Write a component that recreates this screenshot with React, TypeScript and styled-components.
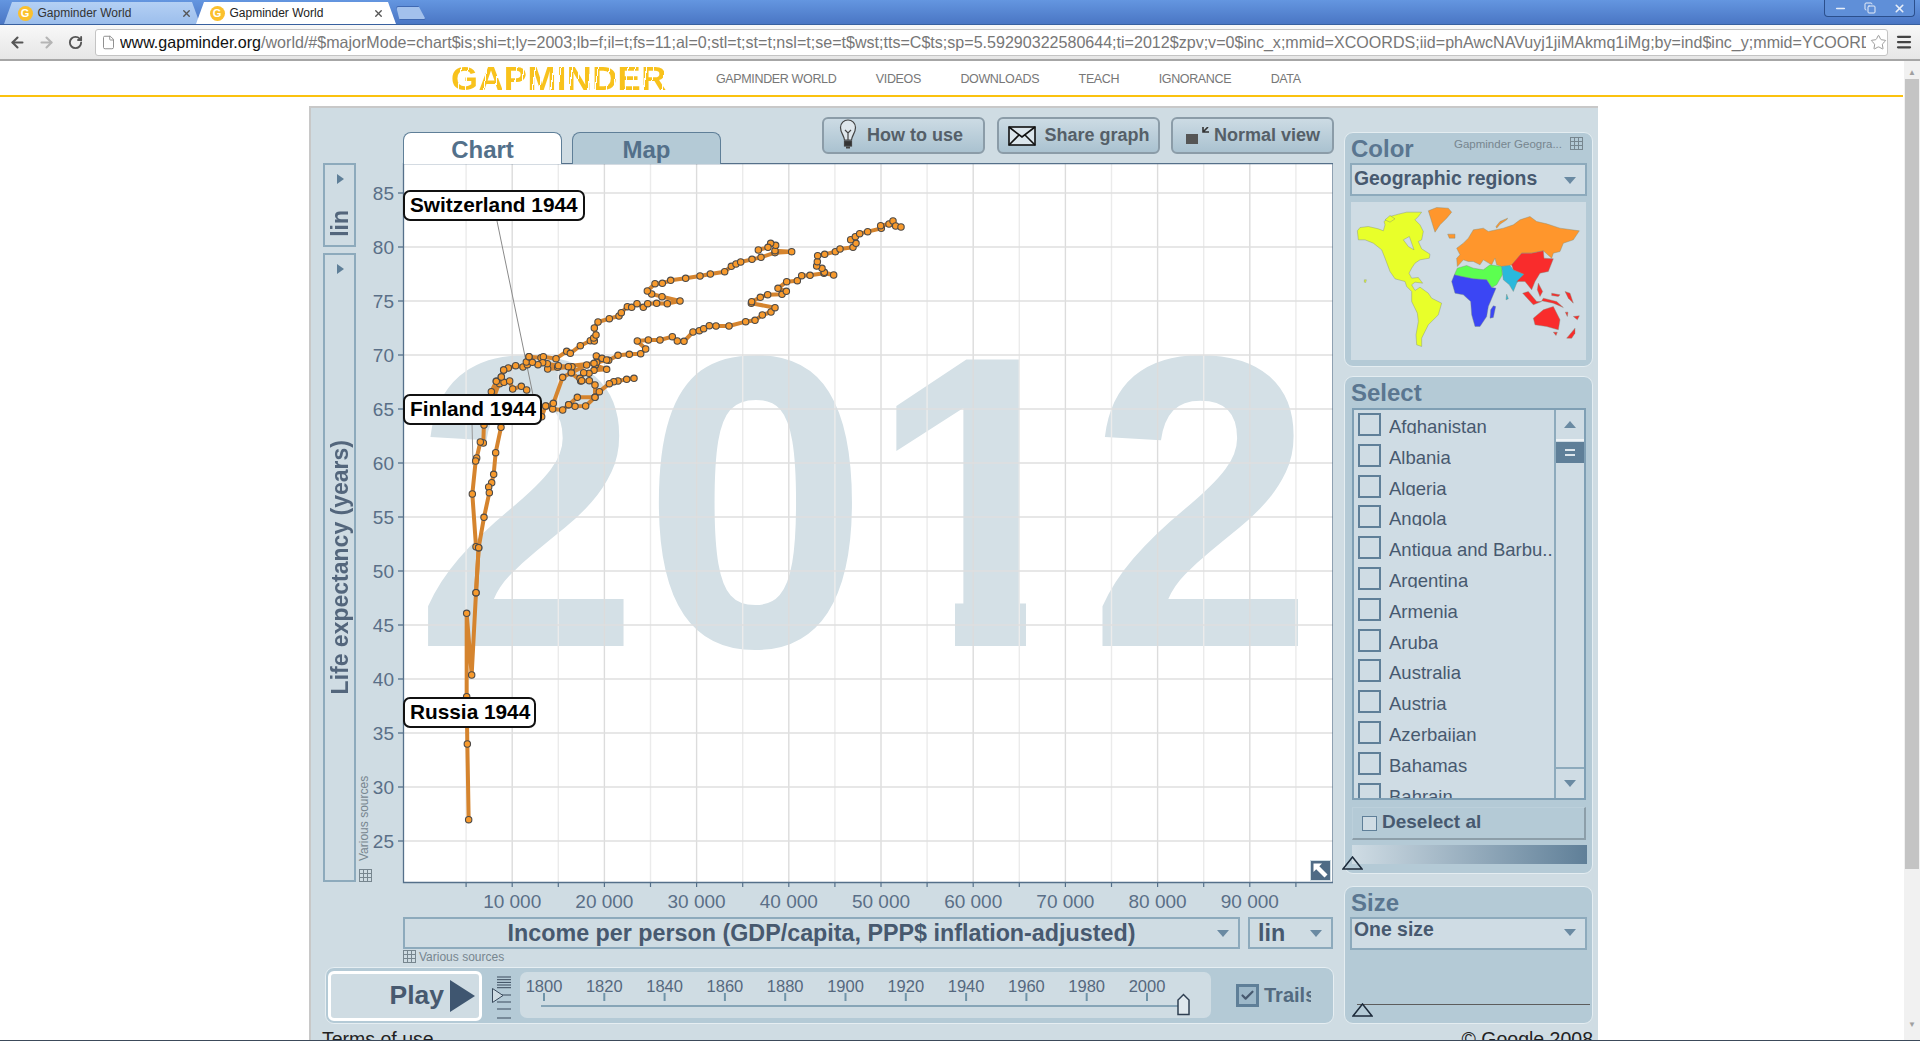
import React from "react";
import styled, { createGlobalStyle } from "styled-components";
import { ArrowLeft, ArrowRight, RotateCw, Star, File, Menu, Minus, Copy, X, Check } from "lucide-react";

const Global = createGlobalStyle`
  html, body { margin: 0; padding: 0; background: #fff; overflow: hidden; }
  body { font-family: "Liberation Sans", Arial, sans-serif; }
  * { box-sizing: border-box; }
`;

const Window = styled.div`
  width: 1920px; height: 1041px; display: flex; flex-direction: column; overflow: hidden;
  border-bottom: 1px solid #3c4a5a; background: #fff;
`;
const TabStrip = styled.div`
  height: 25px; flex: none; display: flex; align-items: flex-end; padding-left: 4px; position: relative;
  background: linear-gradient(#6496e0, #4a76c4); border-bottom: 1px solid #38609f;
`;
const Tab = styled.div<{ $active?: boolean }>`
  width: ${p => (p.$active ? 200 : 196)}px; height: 22px; margin-right: -4px; display: flex; align-items: center; gap: 5px;
  padding: 0 ${p => (p.$active ? 12 : 8)}px 0 13.5px; font-size: 12px;
  color: ${p => (p.$active ? "#222" : "#333")};
  background: ${p => (p.$active ? "#fff" : "linear-gradient(#b4d0f4, #9cbeec)")};
  clip-path: polygon(0 100%, 8px 0, calc(100% - 8px) 0, 100% 100%);
`;
const Favicon = styled.span`
  width: 15px; height: 15px; border-radius: 50%; background: #fbc02d; color: #fff; font-weight: bold; font-size: 11px;
  display: flex; align-items: center; justify-content: center; flex: none;
`;
const TabTitle = styled.span`flex: 1; white-space: nowrap;`;
const NewTab = styled.div`
  width: 30px; height: 14px; margin: 0 0 4px 4px; background: #a3c1ec; border: 1px solid #3f69b3;
  clip-path: polygon(0 0, 75% 0, 100% 100%, 12% 100%); border-radius: 2px;
`;
const WindowControls = styled.div`
  position: absolute; top: 0; right: 5px; width: 91px; height: 17px; display: flex; align-items: center; justify-content: space-around;
  border: 1px solid #2b4f8c; border-top: none; border-radius: 0 0 4px 4px; color: #e8eef8; background: #5f8fd8;
`;
const ToolBar = styled.div`
  height: 36px; flex: none; display: flex; align-items: center; padding-left: 3px;
  background: linear-gradient(#f8f8f8, #e6e6e6); border-bottom: 2px solid #a6a6a6; color: #555;
`;
const NavIcon = styled.span<{ $faded?: boolean }>`
  width: 29px; display: flex; justify-content: center; color: ${p => (p.$faded ? "#b5b5b5" : "#555")};
`;
const AddressBar = styled.div`
  margin-left: 5px; width: 1794px; height: 27px; background: #fff; border: 1px solid #c4c4c4; border-radius: 3px;
  display: flex; align-items: center; padding: 0 0 0 5px; gap: 4px; color: #8a8a8a;
`;
const Url = styled.div`
  width: 1746px; flex: none; overflow: hidden; white-space: nowrap; font-size: 16.07px; color: #777;
  b { font-weight: normal; color: #111; }
`;
const MenuSlot = styled.span`width: 32px; display: flex; justify-content: center; color: #444;`;

const PageRow = styled.div`flex: 1; min-height: 0; display: flex;`;
const PageBody = styled.div`width: 1904px; flex: none; display: flex; flex-direction: column; min-height: 0;`;
const Scrollbar = styled.div`
  width: 16px; flex: none; background: #f1f1f1; display: flex; flex-direction: column; align-items: center; padding-top: 6px; color: #a0a0a0; font-size: 8px;
`;
const ScrollArrow = styled.div`height: 11px; line-height: 11px;`;
const ScrollThumb = styled.div`width: 14px; height: 790px; background: #c4c4c4; margin-top: 1px; margin-bottom: 150px;`;

const SiteNav = styled.div`
  height: 36px; flex: none; display: flex; align-items: center; padding-left: 451px;
  border-bottom: 2px solid #fbc20f; margin-right: 1px;
`;
const Logo = styled.div`
  width: 215px; margin-right: 50px; font-size: 34px; line-height: 30px; font-weight: bold; letter-spacing: 0.4px; white-space: nowrap;
  color: transparent; transform: scaleX(1.02); transform-origin: left center;
  background-image: repeating-linear-gradient(98deg, #f8c21c 0 10px, #fff 10px 11.2px, #f8c21c 11.2px 17px, #fff 17px 18px);
  -webkit-background-clip: text; background-clip: text;
`;
const NavLinks = styled.div`display: flex; gap: 39.5px; padding-top: 1px;`;
const NavLink = styled.span`font-size: 12.5px; color: #777; letter-spacing: -0.36px; white-space: nowrap;`;

const Stage = styled.div`
  margin: 9px 0 0 309px; width: 1289px; flex: 1; min-height: 0; overflow: hidden; background: #cfdce3;
  border-left: 2px solid #c8c8c8; border-top: 2px solid #c8c8c8; padding: 9px 5px 0 12px;
  display: grid; grid-template-columns: 1011px 249px; column-gap: 10px; grid-template-rows: 907px auto;
`;
const LeftColumn = styled.div`display: flex; flex-direction: column;`;
const TopRow = styled.div`height: 47px; flex: none; padding-left: 80px; display: flex; justify-content: space-between;`;
const Tabs = styled.div`display: flex; gap: 10px; align-items: flex-end;`;
const ChartTab = styled.div<{ $active?: boolean; $w: number }>`
  width: ${p => p.$w}px; height: 32px; border: 1px solid #5f7f98; border-bottom: none; border-radius: 8px 8px 0 0;
  background: ${p => (p.$active ? "#fff" : "#b4cad6")}; color: #53708a; font-size: 24px; font-weight: bold; text-align: center; line-height: 33px;
  position: relative; z-index: 1;
`;
const Actions = styled.div`display: flex; gap: 11.5px; align-items: flex-start;`;
const ActionButton = styled.div`
  width: 163px; height: 37px; border: 2px solid #8b9ca8; border-radius: 6px; background: linear-gradient(#ccdbe4, #aac2d0);
  color: #555f68; font-size: 18px; font-weight: bold; display: flex; align-items: center; white-space: nowrap;
`;
const ChartRow = styled.div`height: 754px; flex: none; display: flex; margin-top: -1px;`;
const AxisBar = styled.div`width: 33px; flex: none; display: flex; flex-direction: column; gap: 6px; height: 719px;`;
const AxisBox = styled.div<{ $h: number }>`
  height: ${p => p.$h}px; flex: none; border: 2px solid #8daabc; display: flex; flex-direction: column; align-items: center; padding-top: 9px;
  color: #53667c; font-weight: bold; font-size: 23px;
`;
const TriRight = styled.div`
  width: 0; height: 0; border-left: 7px solid #5f7f98; border-top: 5.5px solid transparent; border-bottom: 5.5px solid transparent; margin-left: 1px; flex: none;
`;
const Vertical = styled.div<{ $top: number }>`
  writing-mode: vertical-rl; transform: rotate(180deg); margin-top: ${p => p.$top}px; white-space: nowrap; line-height: 28px;
`;
const ChartArea = styled.div`position: relative; width: 977px; height: 754px; flex: none;`;
const Bubble = styled.div<{ $x: number; $y: number; $w: number }>`
  position: absolute; left: ${p => p.$x}px; top: ${p => p.$y}px; width: ${p => p.$w}px; height: 31px; background: #fff; border: 2px solid #111; border-radius: 7px;
  font-size: 20.8px; font-weight: bold; color: #000; line-height: 25px; padding-left: 5px; white-space: nowrap;
`;
const ExpandButton = styled.div`
  position: absolute; left: 954px; top: 697px; width: 21px; height: 21px; background: #4f6b85; color: #fff; display: flex; align-items: center; justify-content: center; border: 1px solid #cfdce3;
`;
const DropRow = styled.div`height: 32px; flex: none; display: flex; gap: 8px; margin-left: 80px;`;
const AxisSelect = styled.div<{ $w: number }>`
  width: ${p => p.$w}px; height: 32px; border: 2px solid #8daabc; display: flex; align-items: center; color: #47596f; font-size: 23.3px; font-weight: bold; position: relative; white-space: nowrap;
`;
const AxisSelectText = styled.span`flex: 1; text-align: center; padding-left: 21px;`;
const LinText = styled.span`flex: 1; padding-left: 8px;`;
const TriDown = styled.div<{ $right: number }>`
  flex: none; margin-right: ${p => p.$right}px; width: 0; height: 0; border-top: 7px solid #6a8aa2; border-left: 6px solid transparent; border-right: 6px solid transparent;
`;
const SourceRow = styled.div`height: 18px; flex: none; margin-left: 80px; display: flex; align-items: flex-start; gap: 3px; font-size: 12px; line-height: 15px; color: #77868f; padding-top: 1px;`;
const PlayBar = styled.div`
  height: 57px; width: 1009px; margin-left: 2px; flex: none; display: flex; align-items: center; background: #b4cad6; border: 1px solid #e6eef2; border-radius: 9px; padding-left: 2px;
`;
const PlayButton = styled.div`
  width: 154px; height: 50px; flex: none; border: 3px solid #fff; border-radius: 6px; background: #cfdce3; color: #47596f; font-size: 26.5px; font-weight: bold;
  display: flex; align-items: center; justify-content: flex-end; gap: 6px; padding-right: 4px;
`;
const PlayTri = styled.div`width: 0; height: 0; border-left: 25px solid #3f5670; border-top: 16px solid transparent; border-bottom: 16px solid transparent;`;
const SpeedSlot = styled.div`width: 38px; flex: none; display: flex; padding-left: 9px; align-self: stretch;`;
const Timeline = styled.div`width: 691px; height: 46px; flex: none; background: #cfdce3; border-radius: 7px; align-self: flex-start; margin-top: 4px;`;
const TrailsBox = styled.div`display: flex; align-items: center; gap: 5px; margin-left: 25px; width: 75px; overflow: hidden; color: #536a80; font-size: 20px; font-weight: bold;`;
const TrailCheck = styled.div`
  width: 23px; height: 23px; flex: none; border: 3px solid #5f7f98; background: #9db8c9; color: #47596f; display: flex; align-items: center; justify-content: center;
`;
const RightColumn = styled.div`padding-top: 15px; display: flex; flex-direction: column;`;
const Panel = styled.div<{ $h: number; $gap: number }>`
  height: ${p => p.$h}px; flex: none; margin-bottom: ${p => p.$gap}px; background: #b4cad6; border: 1px solid #e4edf1; border-radius: 9px; padding: 0 5px; position: relative;
`;
const PanelHead = styled.div<{ $h: number }>`
  height: ${p => p.$h}px; display: flex; align-items: center; justify-content: space-between; padding: 1px 4px 0 1px;
`;
const PanelTitle = styled.span`font-size: 24px; font-weight: bold; color: #5a7690;`;
const SourceHint = styled.span`font-size: 11.5px; color: #77868f; display: flex; align-items: center; gap: 8px; margin-bottom: 10px;`;
const Select = styled.div<{ $top?: boolean }>`
  height: 33px; border: 2px solid #8daabc; background: #cfdce4; display: flex; justify-content: space-between;
  align-items: ${p => (p.$top ? "flex-start" : "center")}; color: #47596f; font-size: 19.4px; font-weight: bold; padding: 0 0 ${p => (p.$top ? 0 : 4)}px 2px;
  line-height: 20px;
`;
const DropAlign = styled.div<{ $top?: boolean }>`margin-top: ${p => (p.$top ? 10 : 5)}px;`;
const MapBox = styled.div`margin: 6px 1px 0; height: 158px; background: #cfdce4;`;
const ListBox = styled.div`height: 392px; margin: 0 1px 0 2px; border: 2px solid #7f9fb4; background: #cfdce4; display: flex; overflow: hidden;`;
const Rows = styled.div`width: 200px; flex: none; padding: 3px 0 0 4px; overflow: hidden;`;
const Row = styled.div`height: 30.8px; display: flex; gap: 8px; align-items: flex-start;`;
const Box = styled.div`width: 23px; height: 23px; flex: none; border: 2px solid #5f7f98;`;
const RowText = styled.span`
  display: block; margin-top: 3px; height: 18px; line-height: 21px; overflow: hidden; font-size: 18.5px; color: #47596f; white-space: nowrap;
`;
const ScrollCol = styled.div`flex: 1; border-left: 2px solid #8daabc; display: flex; flex-direction: column; align-items: stretch;`;
const ScrollBtn = styled.div<{ $down?: boolean }>`
  height: 31px; flex: none; display: flex; align-items: center; justify-content: center;
  ${p => (p.$down ? "border-top: 2px solid #8daabc; margin-top: auto;" : "border-bottom: 2px solid #eef3f6;")}
`;
const TriUp = styled.div`width: 0; height: 0; border-bottom: 7px solid #6a8aa2; border-left: 6px solid transparent; border-right: 6px solid transparent;`;
const Thumb = styled.div`height: 21px; margin-top: 1px; background: #5f7f98; display: flex; align-items: center; justify-content: center;`;
const ThumbGrip = styled.div`width: 10px; height: 7px; border-top: 2px solid #dde6ec; border-bottom: 2px solid #dde6ec;`;
const Deselect = styled.div`
  height: 33px; margin: 7px 1px 0 2px; border: 1px solid #bcd0db; border-right: 2px solid #8c9ea9; border-bottom: 2px solid #8c9ea9; display: flex; align-items: center; gap: 5px;
  padding: 0 0 2px 9px; color: #47596f; font-size: 19px; font-weight: bold;
`;
const SmallBox = styled.div`width: 15px; height: 15px; border: 1px solid #5f7f98; background: #cfdce4; margin-top: 2px;`;
const Ramp = styled.div`height: 19px; margin: 5px 0 0 2px; background: linear-gradient(90deg, #cfdce4, #5f7f98);`;
const Marker = styled.svg<{ $x: number; $y: number }>`position: absolute; left: ${p => p.$x}px; top: ${p => p.$y}px;`;
const SizeLine = styled.div`height: 1px; margin: 54px -3px 0 7px; background: #5d5d5d;`;
const Footer = styled.div`
  grid-column: 1 / 3; display: flex; justify-content: space-between; font-size: 19.5px; color: #222; padding: 4px 0 0 0; margin-left: -1px; line-height: 22px;
`;

const GridIcon = () => (
  <svg width="13" height="13" viewBox="0 0 13 13" fill="none" stroke="#77868f" strokeWidth="1" style={{ flex: "none" }}>
    <rect x=".5" y=".5" width="12" height="12" />
    <path d="M4.5 0v13M8.5 0v13M0 4.5h13M0 8.5h13" />
  </svg>
);

const yTicks = [85, 80, 75, 70, 65, 60, 55, 50, 45, 40, 35, 30, 25];
const xGrid = Array.from({ length: 19 }, (_, i) => (i + 1) * 5000);
const yPos = (v: number) => 193 + (85 - v) * 10.8;
const xPos = (v: number) => 420 + (v / 10000) * 92.2;

const z4 = (a: number[]) => { const o: [number, number][] = []; for (let i = 0; i < a.length; i += 2) o.push([400 + a[i] / 3, 190 + a[i + 1] / 3]); return o; };
const z5 = (a: number[]) => { const o: [number, number][] = []; for (let i = 0; i < a.length; i += 2) o.push([420 + a[i] / 3, 400 + a[i + 1] / 3]); return o; };

const trails: [number, number][][] = [
  z4([311,540,325,534,347,527,369,531,382,524,379,516,387,500,423,503,430,500,468,506,500,484,511,490,541,467,571,452,583,453,581,444,588,435,583,414,594,396,628,386,657,378,664,368,682,350,695,352,711,341,730,352,743,341,770,340,802,341,840,333,786,320,755,312,742,303,765,281,787,280,812,271,857,265,900,258,931,252,974,245,994,229,1008,222,1022,216,1056,208,1083,202,1125,188,1175,185,1125,182,1127,166,1112,160,1104,172,1075,180]),
  z4([586,525,589,498,606,505,626,511,654,496,688,493,722,491,737,477,712,453,745,450,780,450,817,440,832,453,852,454,879,426,898,422,911,416,928,407,948,408,987,408,1037,395,1065,391,1087,375,1113,366,1125,353,1054,340,1055,335,1081,322,1103,314,1146,313,1159,304,1134,295,1160,275,1192,272,1205,257,1230,256,1272,250,1301,255,1273,247,1266,235,1250,228,1252,215,1253,197,1274,193,1306,185,1320,177,1359,172,1368,160,1352,149,1366,140,1379,131,1403,125,1444,115,1442,107,1467,102,1479,93,1487,108,1503,111]),
  z4([702,565,680,568,654,573,641,575,628,581,598,605,585,622,557,648,525,649,506,644,488,660,458,657,437,648,425,680]),
  z4([437,648,460,640,488,562,514,548,542,573,568,572,585,585,585,622,532,622,506,644]),
  z4([586,525,620,538,582,541,567,550,551,548,540,565,545,572,514,548,560,525,590,517,620,510,582,520,473,532,443,537,516,530,505,530,475,527,442,521,428,518,414,524,397,517,387,500]),
  z4([311,540,304,561,289,574,299,581,312,577,329,573,338,597,364,589,380,600]),
  z4([274,605,289,574,304,561,252,705]),
  z5([192,60,190,129,181,126,170,174,167,183,157,282,168,440,176,443,168,578,155,825,140,640,140,890,142,1032,146,1259]),
  z5([243,82,227,158,221,223,215,248,206,261,208,278,192,352,176,443,168,578]),
];

const ChartDrawing = () => (
  <svg width="977" height="754" viewBox="356 163 977 754" style={{ display: "block", fontFamily: '"Liberation Sans", Arial, sans-serif' }}>
    <rect x="403" y="163" width="930" height="719" fill="#fff" />
    <text transform="translate(414 646) scale(1 1.026)" fontSize="406" fontWeight="bold" fill="#d4e0e6">2<tspan dx="3">0</tspan><tspan dx="0">1</tspan><tspan dx="-6">2</tspan></text>
    <rect x="885" y="596" width="70" height="54" fill="#fff" />
    <rect x="1026" y="596" width="66" height="54" fill="#fff" />
    {xGrid.map((v, i) => (
      <line key={v} x1={xPos(v)} x2={xPos(v)} y1="163" y2="882" stroke={i % 2 ? "#dcdcdc" : "#ebebeb"} strokeWidth="1.4" />
    ))}
    {yTicks.map(v => (
      <line key={v} x1="403" x2="1333" y1={yPos(v)} y2={yPos(v)} stroke="#dfdfdf" strokeWidth="1.4" />
    ))}
    <line x1="497" y1="221" x2="533" y2="395" stroke="#8a8a8a" />
    <line x1="472" y1="423" x2="473" y2="465" stroke="#9a9a9a" />
    {trails.map((t, i) => (
      <polyline key={i} points={t.map(p => p.join(",")).join(" ")} fill="none" stroke="#d5842e" strokeWidth="4" strokeLinejoin="round" />
    ))}
    {trails.flat().map((p, i) => (
      <circle key={i} cx={p[0]} cy={p[1]} r="3.2" fill="#f89a2c" stroke="#4d4a48" strokeWidth="1.1" />
    ))}
    <path d="M403.5 163V882.5H1333V163.5H403.5" fill="none" stroke="#55708a" strokeWidth="1.3" />
    {yTicks.map(v => (
      <g key={v}>
        <line x1="398" x2="403" y1={yPos(v)} y2={yPos(v)} stroke="#55708a" strokeWidth="1.3" />
        <text x="394" y={yPos(v) + 7} textAnchor="end" fontSize="19" fill="#5a6f87">{v}</text>
      </g>
    ))}
    {xGrid.map((v, i) => (
      <g key={v}>
        <line x1={xPos(v)} x2={xPos(v)} y1="882" y2="887" stroke="#55708a" strokeWidth="1.2" />
        {i % 2 === 1 && i < 18 && (
          <text x={xPos(v)} y="908" textAnchor="middle" fontSize="19" fill="#5a6f87">{`${v / 1000} 000`}</text>
        )}
      </g>
    ))}
    <text transform="translate(368 861) rotate(-90)" fontSize="12" fill="#77868f">Various sources</text>
    <g transform="translate(359 869)" fill="none" stroke="#77868f">
      <rect x=".5" y=".5" width="12" height="12" />
      <path d="M4.5 0v13M8.5 0v13M0 4.5h13M0 8.5h13" />
    </g>
  </svg>
);

const TimelineDrawing = () => (
  <svg width="691" height="46" viewBox="520 972 691 46" style={{ display: "block", fontFamily: '"Liberation Sans", Arial, sans-serif' }}>
    {Array.from({ length: 11 }, (_, i) => {
      const x = 544 + i * 60.3;
      return (
        <g key={i}>
          <text x={x} y="991.5" textAnchor="middle" fontSize="16.5" fill="#55687e">{1800 + i * 20}</text>
          <line x1={x} x2={x} y1="993" y2="1001" stroke="#6f93a8" strokeWidth="2" />
        </g>
      );
    })}
    <line x1="541" x2="1178" y1="1006" y2="1006" stroke="#6f93a8" strokeWidth="1.4" />
    <path d="M1178 1014.5V1000L1183.5 994.5L1189 1000V1014.5Z" fill="#dfe8ed" stroke="#2f3f52" strokeWidth="1.5" />
  </svg>
);

const SpeedDrawing = () => (
  <svg width="24" height="55" viewBox="0 0 24 55">
    <path d="M6 9h14M6 11.7h14M6 14.4h14M6 17h14M6 19.7h14M6 27h14M6 34h14M6 41h14M6 50h14" stroke="#3a4a5c" strokeWidth="1" fill="none" />
    <path d="M1.5 20.5L12 27.5L1.5 34.5Z" fill="#cfdce3" stroke="#3a4a5c" strokeWidth="1" />
  </svg>
);

const WorldMap = () => (
  <svg width="235" height="158" viewBox="33 232 705 473" style={{ display: "block" }}>
    <g strokeWidth="1.2" stroke="#7b8a78" strokeLinejoin="round">
      <g fill="#e8ff2a">
        <polygon points="52,318 60,308 85,305 115,312 130,318 135,300 132,290 150,275 175,268 200,262 245,262 235,275 225,285 240,300 250,320 245,345 235,350 245,372 270,388 268,400 240,405 225,415 215,430 207,445 215,460 235,458 248,475 225,472 215,480 225,497 240,487 265,505 275,520 305,535 295,570 265,600 245,640 245,665 230,660 228,630 235,590 232,565 215,530 215,500 200,485 195,470 165,462 150,440 135,400 125,375 100,355 75,345 55,345" />
        <polygon points="73,465 79,465 77,473 73,472" />
        <polygon points="135,285 150,272 165,282 150,292" />
      </g>
      <polygon fill="#cfdce4" points="190,345 208,335 222,375 205,365" />
      <g fill="#ff962c">
        <polygon points="265,258 290,248 325,250 335,262 320,280 300,300 285,322 278,300 272,280" />
        <polygon points="323,328 345,328 345,340 328,340" />
        <polygon points="350,370 370,355 385,340 400,315 430,310 445,320 490,310 520,300 540,285 570,275 590,290 620,297 660,310 718,318 700,345 670,355 660,380 640,385 635,400 610,378 575,385 545,385 520,420 485,425 470,420 465,400 455,420 430,405 420,420 400,410 385,410 370,405 352,425 350,400 360,390" />
        <polygon points="468,305 480,290 503,280 500,285 480,298 470,310" />
      </g>
      <polygon fill="#5cff50" points="343,450 352,430 380,422 400,430 430,435 450,420 485,425 487,450 470,480 455,488 440,465 400,462 365,455" />
      <g fill="#3b46f4">
        <polygon points="335,470 343,450 365,455 400,462 440,465 455,488 468,490 445,545 440,575 420,605 405,605 395,570 392,530 370,510 345,505" />
        <polygon points="460,543 467,545 460,578 450,580 452,555" />
      </g>
      <g fill="#2bb8dc">
        <polygon points="485,425 510,422 520,435 552,448 530,475 520,500 508,480 490,465" />
        <polygon points="500,508 505,522 498,525" />
      </g>
      <g fill="#f92c2c">
        <polygon points="515,420 545,385 575,385 610,378 612,400 640,402 625,440 600,445 585,470 575,495 555,470 530,470 552,448 520,435" />
        <polygon points="548,505 565,500 590,530 605,530 580,540" />
        <polygon points="595,475 608,500 600,515 592,495" />
        <polygon points="610,520 650,530 670,548 640,535 605,528" />
        <polygon points="635,505 660,510 655,515 635,512" />
        <polygon points="675,500 690,505 700,535 685,520" />
        <polygon points="580,580 610,555 640,545 660,585 655,615 620,605 585,600" />
        <polygon points="640,622 652,622 648,632" />
        <polygon points="680,640 705,610 705,625 695,640" />
        <polygon points="676,562 684,562 682,575" />
        <polygon points="700,575 718,573 712,585" />
      </g>
    </g>
  </svg>
);

const Bulb = () => (
  <svg width="18" height="33" viewBox="0 0 18 33" fill="none" stroke="#444" strokeWidth="1.2" style={{ margin: "0 10px 0 15px" }}>
    <path d="M5.5 21C5 16 1.5 14 1.5 8.5A7.5 7.5 0 0 1 16.5 8.5C16.5 14 13 16 12.5 21Z" fill="#dfe7ec" />
    <path d="M6 11l3 3 3-3M9 14v7" />
    <rect x="5.5" y="22" width="7" height="5" fill="#333" />
    <path d="M7 28.5h4" strokeWidth="2" />
  </svg>
);
const Envelope = () => (
  <svg width="28" height="20" viewBox="0 0 28 20" fill="#dce6ec" stroke="#111" strokeWidth="1.6" style={{ margin: "0 9px" }}>
    <rect x="1" y="1" width="26" height="18" />
    <path d="M1 1L14 11L27 1M1 19L11 9M27 19L17 9" fill="none" />
  </svg>
);
const Shrink = () => (
  <svg width="24" height="18" viewBox="0 0 24 18" style={{ margin: "0 4px 0 13px" }}>
    <rect x="0" y="7" width="12" height="10" fill="#555" />
    <path d="M17 0V5H23M17 5L22 0" stroke="#333" strokeWidth="1.6" fill="none" />
  </svg>
);
const ExpandArrow = () => (
  <svg width="17" height="17" viewBox="0 0 17 17" fill="#fff">
    <path d="M1.5 1.5H10L7.3 4.2L15.5 12.5L12.5 15.5L4.2 7.3L1.5 10Z" />
  </svg>
);

const countries = ["Afghanistan", "Albania", "Algeria", "Angola", "Antigua and Barbu..", "Argentina", "Armenia", "Aruba", "Australia", "Austria", "Azerbaijan", "Bahamas", "Bahrain"];

export default function App() {
  return (
    <>
      <Global />
      <Window>
        <TabStrip>
          <Tab><Favicon>G</Favicon><TabTitle>Gapminder World</TabTitle><X size={11} strokeWidth={3} color="#555" /></Tab>
          <Tab $active><Favicon>G</Favicon><TabTitle>Gapminder World</TabTitle><X size={11} strokeWidth={3} color="#555" /></Tab>
          <NewTab />
          <WindowControls>
            <Minus size={13} strokeWidth={3} />
            <Copy size={12} strokeWidth={2} />
            <X size={13} strokeWidth={3} />
          </WindowControls>
        </TabStrip>
        <ToolBar>
          <NavIcon><ArrowLeft size={17} strokeWidth={3} /></NavIcon>
          <NavIcon $faded><ArrowRight size={17} strokeWidth={3} /></NavIcon>
          <NavIcon><RotateCw size={15} strokeWidth={3} /></NavIcon>
          <AddressBar>
            <File size={15} strokeWidth={1.5} />
            <Url><b>www.gapminder.org</b>/world/#$majorMode=chart$is;shi=t;ly=2003;lb=f;il=t;fs=11;al=0;stl=t;st=t;nsl=t;se=t$wst;tts=C$ts;sp=5.59290322580644;ti=2012$zpv;v=0$inc_x;mmid=XCOORDS;iid=phAwcNAVuyj1jiMAkmq1iMg;by=ind$inc_y;mmid=YCOORDS;iid=phAwcNAVuyj2tPLxKvvnNPA;by=ind$inc_s</Url>
            <Star size={17} strokeWidth={1.2} />
          </AddressBar>
          <MenuSlot><Menu size={18} strokeWidth={3} /></MenuSlot>
        </ToolBar>
        <PageRow>
          <PageBody>
            <SiteNav>
              <Logo>GAPMINDER</Logo>
              <NavLinks>
                <NavLink>GAPMINDER WORLD</NavLink>
                <NavLink>VIDEOS</NavLink>
                <NavLink>DOWNLOADS</NavLink>
                <NavLink>TEACH</NavLink>
                <NavLink>IGNORANCE</NavLink>
                <NavLink>DATA</NavLink>
              </NavLinks>
            </SiteNav>
            <Stage>
              <LeftColumn>
                <TopRow>
                  <Tabs>
                    <ChartTab $active $w={159}>Chart</ChartTab>
                    <ChartTab $w={149}>Map</ChartTab>
                  </Tabs>
                  <Actions>
                    <ActionButton><Bulb />How to use</ActionButton>
                    <ActionButton><Envelope />Share graph</ActionButton>
                    <ActionButton><Shrink />Normal view</ActionButton>
                  </Actions>
                </TopRow>
                <ChartRow>
                  <AxisBar>
                    <AxisBox $h={84}><TriRight /><Vertical $top={26}>lin</Vertical></AxisBox>
                    <AxisBox $h={629}><TriRight /><Vertical $top={166}>Life expectancy (years)</Vertical></AxisBox>
                  </AxisBar>
                  <ChartArea>
                    <ChartDrawing />
                    <Bubble $x={47} $y={27} $w={182}>Switzerland 1944</Bubble>
                    <Bubble $x={47} $y={231} $w={139}>Finland 1944</Bubble>
                    <Bubble $x={47} $y={534} $w={133}>Russia 1944</Bubble>
                    <ExpandButton><ExpandArrow /></ExpandButton>
                  </ChartArea>
                </ChartRow>
                <DropRow>
                  <AxisSelect $w={837}>
                    <AxisSelectText>Income per person (GDP/capita, PPP$ inflation-adjusted)</AxisSelectText>
                    <TriDown $right={9} />
                  </AxisSelect>
                  <AxisSelect $w={85}>
                    <LinText>lin</LinText>
                    <TriDown $right={9} />
                  </AxisSelect>
                </DropRow>
                <SourceRow><GridIcon />Various sources</SourceRow>
                <PlayBar>
                  <PlayButton>Play<PlayTri /></PlayButton>
                  <SpeedSlot><SpeedDrawing /></SpeedSlot>
                  <Timeline><TimelineDrawing /></Timeline>
                  <TrailsBox><TrailCheck><Check size={15} strokeWidth={3.5} /></TrailCheck>Trails</TrailsBox>
                </PlayBar>
              </LeftColumn>
              <RightColumn>
                <Panel $h={235} $gap={9}>
                  <PanelHead $h={30}>
                    <PanelTitle>Color</PanelTitle>
                    <SourceHint>Gapminder Geogra...<GridIcon /></SourceHint>
                  </PanelHead>
                  <Select>Geographic regions<DropAlign><TriDown $right={9} /></DropAlign></Select>
                  <MapBox><WorldMap /></MapBox>
                </Panel>
                <Panel $h={498} $gap={12}>
                  <PanelHead $h={31}><PanelTitle>Select</PanelTitle></PanelHead>
                  <ListBox>
                    <Rows>
                      {countries.map(c => (
                        <Row key={c}><Box /><RowText>{c}</RowText></Row>
                      ))}
                    </Rows>
                    <ScrollCol>
                      <ScrollBtn><TriUp /></ScrollBtn>
                      <Thumb><ThumbGrip /></Thumb>
                      <ScrollBtn $down><TriDown $right={0} /></ScrollBtn>
                    </ScrollCol>
                  </ListBox>
                  <Deselect><SmallBox />Deselect al</Deselect>
                  <Ramp />
                  <Marker $x={-3} $y={479} width="21" height="14" viewBox="0 0 21 14">
                    <path d="M10.5 1L20 13H1Z" fill="none" stroke="#1c2a3a" strokeWidth="1.5" />
                  </Marker>
                </Panel>
                <Panel $h={138} $gap={0}>
                  <PanelHead $h={30}><PanelTitle>Size</PanelTitle></PanelHead>
                  <Select $top>One size<DropAlign $top><TriDown $right={9} /></DropAlign></Select>
                  <SizeLine />
                  <Marker $x={7} $y={116} width="21" height="14" viewBox="0 0 21 14">
                    <path d="M10.5 1L20 13H1Z" fill="none" stroke="#1c2a3a" strokeWidth="1.5" />
                  </Marker>
                </Panel>
              </RightColumn>
              <Footer><span>Terms of use</span><span>© Google 2008</span></Footer>
            </Stage>
          </PageBody>
          <Scrollbar>
            <ScrollArrow>▲</ScrollArrow>
            <ScrollThumb />
            <ScrollArrow>▼</ScrollArrow>
          </Scrollbar>
        </PageRow>
      </Window>
    </>
  );
}
